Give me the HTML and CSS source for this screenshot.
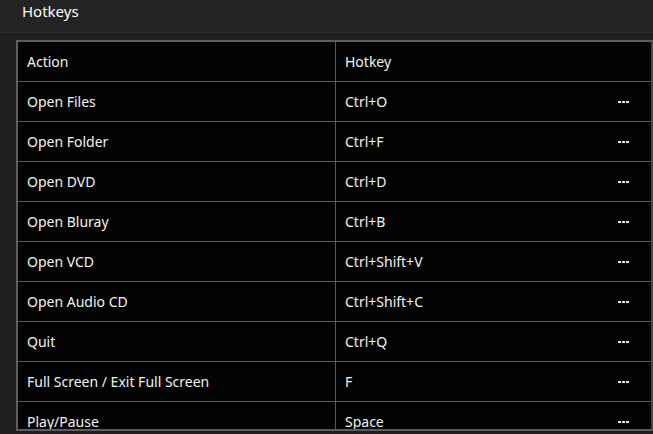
FILE: index.html
```html
<!DOCTYPE html>
<html>
<head>
<meta charset="utf-8">
<link rel="stylesheet" href="styles.css">
</head>
<body>
<div class="titlebar"><span class="title">Hotkeys</span></div>
<div class="content">
  <div class="table">
    <div class="row head">
      <div class="cell c1">Action</div>
      <div class="cell c2">Hotkey</div>
    </div>
    <div class="row"><div class="cell c1">Open Files</div><div class="cell c2"><span>Ctrl+O</span><span class="more"><i></i><i></i><i></i></span></div></div>
    <div class="row"><div class="cell c1">Open Folder</div><div class="cell c2"><span>Ctrl+F</span><span class="more"><i></i><i></i><i></i></span></div></div>
    <div class="row"><div class="cell c1">Open DVD</div><div class="cell c2"><span>Ctrl+D</span><span class="more"><i></i><i></i><i></i></span></div></div>
    <div class="row"><div class="cell c1">Open Bluray</div><div class="cell c2"><span>Ctrl+B</span><span class="more"><i></i><i></i><i></i></span></div></div>
    <div class="row"><div class="cell c1">Open VCD</div><div class="cell c2"><span>Ctrl+Shift+V</span><span class="more"><i></i><i></i><i></i></span></div></div>
    <div class="row"><div class="cell c1">Open Audio CD</div><div class="cell c2"><span>Ctrl+Shift+C</span><span class="more"><i></i><i></i><i></i></span></div></div>
    <div class="row"><div class="cell c1">Quit</div><div class="cell c2"><span>Ctrl+Q</span><span class="more"><i></i><i></i><i></i></span></div></div>
    <div class="row"><div class="cell c1">Full Screen / Exit Full Screen</div><div class="cell c2"><span>F</span><span class="more"><i></i><i></i><i></i></span></div></div>
    <div class="row"><div class="cell c1">Play/Pause</div><div class="cell c2"><span>Space</span><span class="more"><i></i><i></i><i></i></span></div></div>
  </div>
</div>
</body>
</html>
```
FILE: styles.css
```css
html, body {
  margin: 0;
  padding: 0;
  background: #1f1f1f;
  overflow: hidden;
}
body {
  font-family: "Noto Sans", "Liberation Sans", sans-serif;
  color: #f2f2f2;
  width: 653px;
  height: 434px;
}
.titlebar {
  height: 33px;
  background: #232323;
  border-bottom: 1px solid #2b2b2b;
  box-sizing: border-box;
  padding-left: 22px;
  display: flex;
  align-items: center;
}
.title {
  font-size: 15px;
  margin-top: -10px;
  color: #ffffff;
}
.content {
  padding: 7px 0 0 16px;
}
.table {
  height: 391px;
  box-sizing: border-box;
  border: 2px solid #5e5e5e;
  border-right-color: #4a4a4a;
  background: #030303;
  overflow: hidden;
}
.row {
  display: grid;
  grid-template-columns: 318px 1fr;
  height: 40px;
  border-bottom: 1px solid #5a5a5a;
  box-sizing: border-box;
}
.cell {
  display: flex;
  align-items: center;
  padding-left: 9px;
  font-size: 14px;
}
.c1 {
  border-right: 1px solid #5a5a5a;
}
.c2 {
  justify-content: space-between;
  padding-right: 22px;
}
.more {
  display: flex;
  gap: 1px;
}
.more i {
  display: block;
  width: 3px;
  height: 2px;
  background: #e6e6e6;
}
```
